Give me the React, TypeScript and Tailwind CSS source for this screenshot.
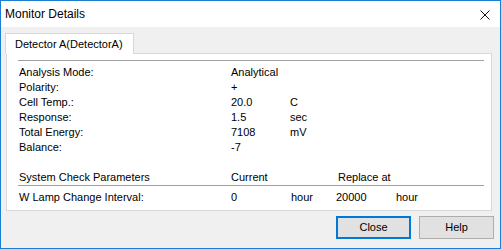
import React from 'react';

const rows = [
  { label: 'Analysis Mode:', value: 'Analytical', unit: '' },
  { label: 'Polarity:', value: '+', unit: '' },
  { label: 'Cell Temp.:', value: '20.0', unit: 'C' },
  { label: 'Response:', value: '1.5', unit: 'sec' },
  { label: 'Total Energy:', value: '7108', unit: 'mV' },
  { label: 'Balance:', value: '-7', unit: '' },
];

export default function App() {
  return (
    <div
      className="w-[501px] h-[249px] border border-[#1a7fd4] flex flex-col bg-[#f0f0f0] text-black"
      style={{ fontFamily: '"Liberation Sans", Arial, sans-serif' }}
    >
      {/* Title bar */}
      <div className="h-[26px] bg-white flex items-center justify-between pl-[4px] pr-[10px]">
        <span className="text-[12px]">Monitor Details</span>
        <svg width="10" height="10" viewBox="0 0 10 10" className="mt-[1px]">
          <path d="M0.5 0.5 L9.5 9.5 M9.5 0.5 L0.5 9.5" stroke="#111" strokeWidth="1" />
        </svg>
      </div>

      {/* Body */}
      <div className="flex-1 flex flex-col pl-[4px] pr-[8px] pt-[6px] text-[11px]">
        {/* Tab */}
        <div className="flex">
          <div className="h-[21px] w-[129px] bg-white border border-b-0 border-[#d9d9d9] flex items-center pl-[9px] relative z-10 -mb-px">
            Detector A(DetectorA)
          </div>
        </div>

        {/* Panel */}
        <div className="ml-[1px] w-[486px] h-[158px] bg-white border border-[#d9d9d9] pt-[6px] pl-[11px] pr-[7px]">
          <div className="h-px bg-[#a0a0a0]" />
          <div className="mt-[4px] pl-[1px]">
            {rows.map((r) => (
              <div key={r.label} className="h-[15px] flex items-center">
                <span className="w-[212px]">{r.label}</span>
                <span className="w-[59px]">{r.value}</span>
                <span>{r.unit}</span>
              </div>
            ))}
            <div className="h-[15px]" />
            <div className="h-[15px] flex items-center">
              <span className="w-[212px]">System Check Parameters</span>
              <span className="w-[107px]">Current</span>
              <span>Replace at</span>
            </div>
          </div>
          <div className="h-px bg-[#a0a0a0]" />
          <div className="mt-[4px] pl-[1px] h-[15px] flex items-center">
            <span className="w-[212px]">W Lamp Change Interval:</span>
            <span className="w-[60px]">0</span>
            <span className="w-[45px]">hour</span>
            <span className="w-[60px]">20000</span>
            <span>hour</span>
          </div>
        </div>

        {/* Buttons */}
        <div className="flex justify-end gap-[8px] mt-[5px] pr-[-1px]">
          <button className="w-[75px] h-[23px] bg-[#e1e1e1] border-2 border-[#0078d7] flex items-center justify-center text-[11px]">
            Close
          </button>
          <button className="w-[75px] h-[23px] bg-[#e1e1e1] border border-[#adadad] flex items-center justify-center text-[11px] mr-[-2px]">
            Help
          </button>
        </div>
      </div>
    </div>
  );
}
